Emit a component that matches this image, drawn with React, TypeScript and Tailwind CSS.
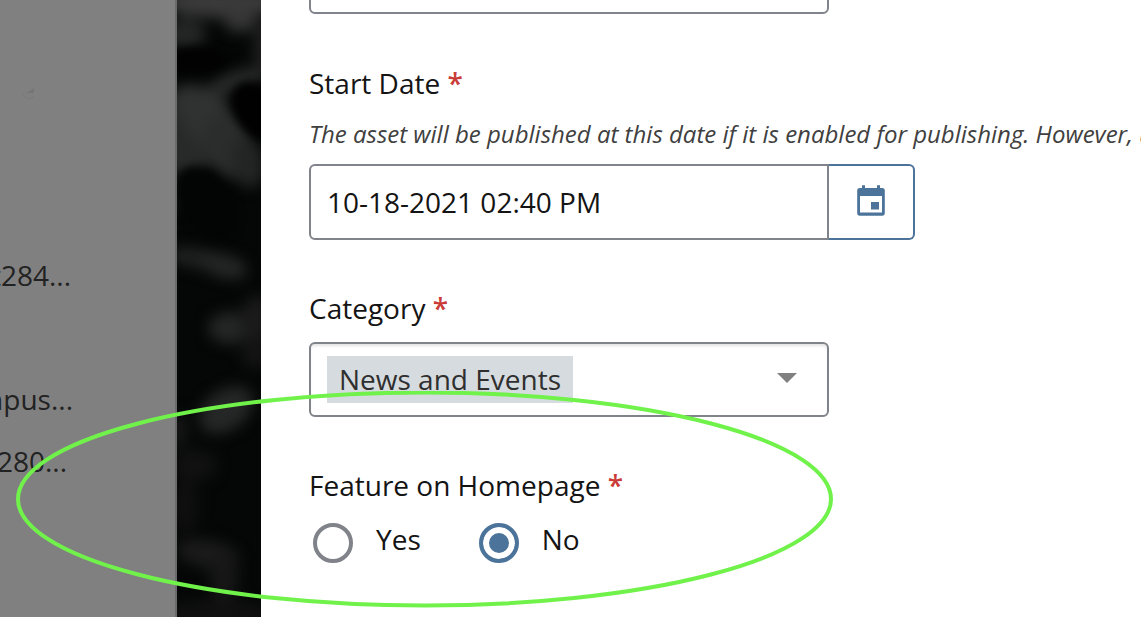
import type { ReactNode } from "react";

const assets = [
  { name: "Newsroom-t284...", end: "pr-0.5" },
  { name: "", end: "pr-0" },
  { name: "Campus...", end: "pr-0" },
  { name: "Newsroom-280...", end: "pr-1.5" },
];

const smudges = [
  [222, 2, 60, 16, 0, "#3a3a3a"],
  [240, 20, 16, 12, 0, "#363636"],
  [184, 34, 22, 16, 0, "#242626"],
  [264, 48, 10, 30, 0, "#202020"],
  [236, 82, 30, 11, -18, "#282929"],
  [184, 132, 34, 46, 0, "#282a2a"],
  [212, 122, 24, 46, -42, "#303131"],
  [230, 146, 26, 34, -24, "#2b2c2c"],
  [248, 162, 16, 26, -10, "#232525"],
  [178, 194, 8, 16, 0, "#1c1c1c"],
  [196, 258, 30, 10, 8, "#1f2121"],
  [224, 266, 24, 12, 15, "#242626"],
  [258, 305, 12, 9, 0, "#1a1a1a"],
  [230, 328, 22, 16, 0, "#242525"],
  [256, 320, 16, 22, 0, "#1a1a1a"],
  [256, 354, 14, 14, 0, "#151515"],
  [226, 410, 30, 20, -35, "#252626"],
  [178, 430, 8, 18, 0, "#191919"],
  [195, 465, 22, 16, 0, "#111111"],
  [185, 505, 14, 30, 0, "#0f0f0f"],
  [208, 554, 32, 14, 10, "#1b1b1b"],
  [224, 578, 14, 26, 0, "#171717"],
  [215, 614, 60, 14, 0, "#101010"],
] as const;

function Backdrop() {
  return (
    <svg
      className="h-full w-full bg-[#050606]"
      viewBox="177 0 84 617"
      preserveAspectRatio="xMidYMin slice"
      aria-hidden="true"
    >
      <defs>
        <filter id="soft" filterUnits="userSpaceOnUse" x="137" y="-40" width="164" height="697" colorInterpolationFilters="sRGB">
          <feGaussianBlur stdDeviation="7" />
        </filter>
        <filter id="edge" filterUnits="userSpaceOnUse" x="137" y="-40" width="164" height="697" colorInterpolationFilters="sRGB">
          <feGaussianBlur stdDeviation="4" />
        </filter>
      </defs>
      <g filter="url(#soft)">
        {smudges.map(([cx, cy, rx, ry, turn, fill]) => (
          <ellipse
            key={`${cx}-${cy}`}
            cx={cx}
            cy={cy}
            rx={rx}
            ry={ry}
            fill={fill}
            transform={`rotate(${turn} ${cx} ${cy})`}
          />
        ))}
      </g>
      <g filter="url(#edge)">
        <ellipse cx="258" cy="112" rx="22" ry="34" fill="#010101" transform="rotate(-35 258 112)" />
        <ellipse cx="206" cy="202" rx="26" ry="40" fill="#030404" transform="rotate(-35 206 202)" />
        <ellipse cx="192" cy="60" rx="38" ry="13" fill="#020202" />
      </g>
    </svg>
  );
}

function Required({ children }: { children: ReactNode }) {
  return (
    <>
      {children} <span className="font-semibold text-[#c93c37]">*</span>
    </>
  );
}

function Choice({ label, checked }: { label: string; checked?: boolean }) {
  return (
    <label className="flex items-start gap-[23px]">
      <input
        type="radio"
        name="feature"
        defaultChecked={checked}
        className="mt-[3px] size-10 appearance-none rounded-full border-4 border-[#808389] bg-white checked:border-[#4c7399] checked:bg-[#4c7399] checked:shadow-[inset_0_0_0_6px_white]"
      />
      {label}
    </label>
  );
}

export default function App() {
  return (
    <div className="relative grid min-h-screen grid-cols-[177px_84px_minmax(0,1fr)] overflow-hidden bg-white font-['Open_Sans','Noto_Sans',sans-serif] text-[28px] leading-[38px] text-[#141414]">
      <aside className="overflow-hidden border-r-2 border-[#6b6b6e] bg-[#808080] pt-[84px] text-[#222222]">
        <svg viewBox="0 0 16 16" className="ml-[22px] size-4" aria-hidden="true">
          <path d="M12 4v5H5z" fill="#757575" />
          <path d="M1 10c1 5 8 6 11 2" fill="none" stroke="#7a7a7a" />
        </svg>
        <ul className="mt-36 w-[73px]">
          {assets.map(({ name, end }, i) => (
            <li key={i} className={`flex h-[62px] items-center justify-end whitespace-nowrap ${end}`}>
              {name}
            </li>
          ))}
        </ul>
      </aside>

      <div className="relative">
        <div className="absolute inset-0">
          <Backdrop />
        </div>
      </div>

      <main className="flex flex-col gap-[49px] overflow-hidden pl-12">
        <input
          type="text"
          aria-label="Name"
          className="-mt-[62px] h-[76px] w-[520px] shrink-0 rounded-md border-2 border-[#808389] px-4"
        />

        <div className="pt-px">
          <label htmlFor="start" className="block">
            <Required>Start Date</Required>
          </label>
          <p className="mt-4 text-2xl leading-[32px] whitespace-nowrap text-[#404040] italic">
            The asset will be published at this date if it is enabled for publishing. However, users can
          </p>
          <div className="mt-3.5 flex h-[76px]">
            <input
              id="start"
              type="text"
              defaultValue="10-18-2021 02:40 PM"
              className="w-[520px] rounded-l-md border-2 border-[#808389] px-4"
            />
            <button
              type="button"
              aria-label="Choose date"
              className="flex w-[86px] items-center justify-center rounded-r-md border-2 border-l-0 border-[#4c7399] text-[#4c7399]"
            >
              <svg viewBox="0 0 28 34" className="h-[34px] w-7" fill="currentColor" aria-hidden="true">
                <path
                  fillRule="evenodd"
                  d="M5 .3h3V3h12V.3h3V3h2.2a2.6 2.6 0 0 1 2.6 2.6v22.5a2.6 2.6 0 0 1-2.6 2.6H2.8a2.6 2.6 0 0 1-2.6-2.6V5.6A2.6 2.6 0 0 1 2.8 3H5zM3 11v16.5h22V11z"
                />
                <path d="M14 17h8v7.5h-8z" />
              </svg>
            </button>
          </div>
        </div>

        <div>
          <label htmlFor="category" className="block">
            <Required>Category</Required>
          </label>
          <div className="mt-[15px] flex h-[75px] w-[520px] items-center justify-between rounded-md border-2 border-[#808389] pr-[30px] pl-4 shadow-[inset_0_3px_3px_-1px_#e4e4e4]">
            <select
              id="category"
              className="field-sizing-content h-[47px] appearance-none bg-[#d6dbdf] px-3 pb-0.5 text-[#2f2f2f]"
            >
              <option>News and Events</option>
            </select>
            <svg viewBox="0 0 20 14" className="h-3.5 w-5" fill="#808080" aria-hidden="true">
              <path d="M0 0h20L10 10z" />
            </svg>
          </div>
        </div>

        <fieldset>
          <legend>
            <Required>Feature on Homepage</Required>
          </legend>
          <div className="mt-4 flex gap-[58px] pl-1">
            <Choice label="Yes" />
            <Choice label="No" checked />
          </div>
        </fieldset>
      </main>

      <svg
        className="pointer-events-none absolute top-[391px] left-[16px] h-[217px] w-[818px]"
        viewBox="0 0 818 217"
        fill="none"
        aria-hidden="true"
      >
        <ellipse cx="408.5" cy="108" rx="406.5" ry="106.5" stroke="#70f24b" strokeWidth="4" />
      </svg>
    </div>
  );
}
